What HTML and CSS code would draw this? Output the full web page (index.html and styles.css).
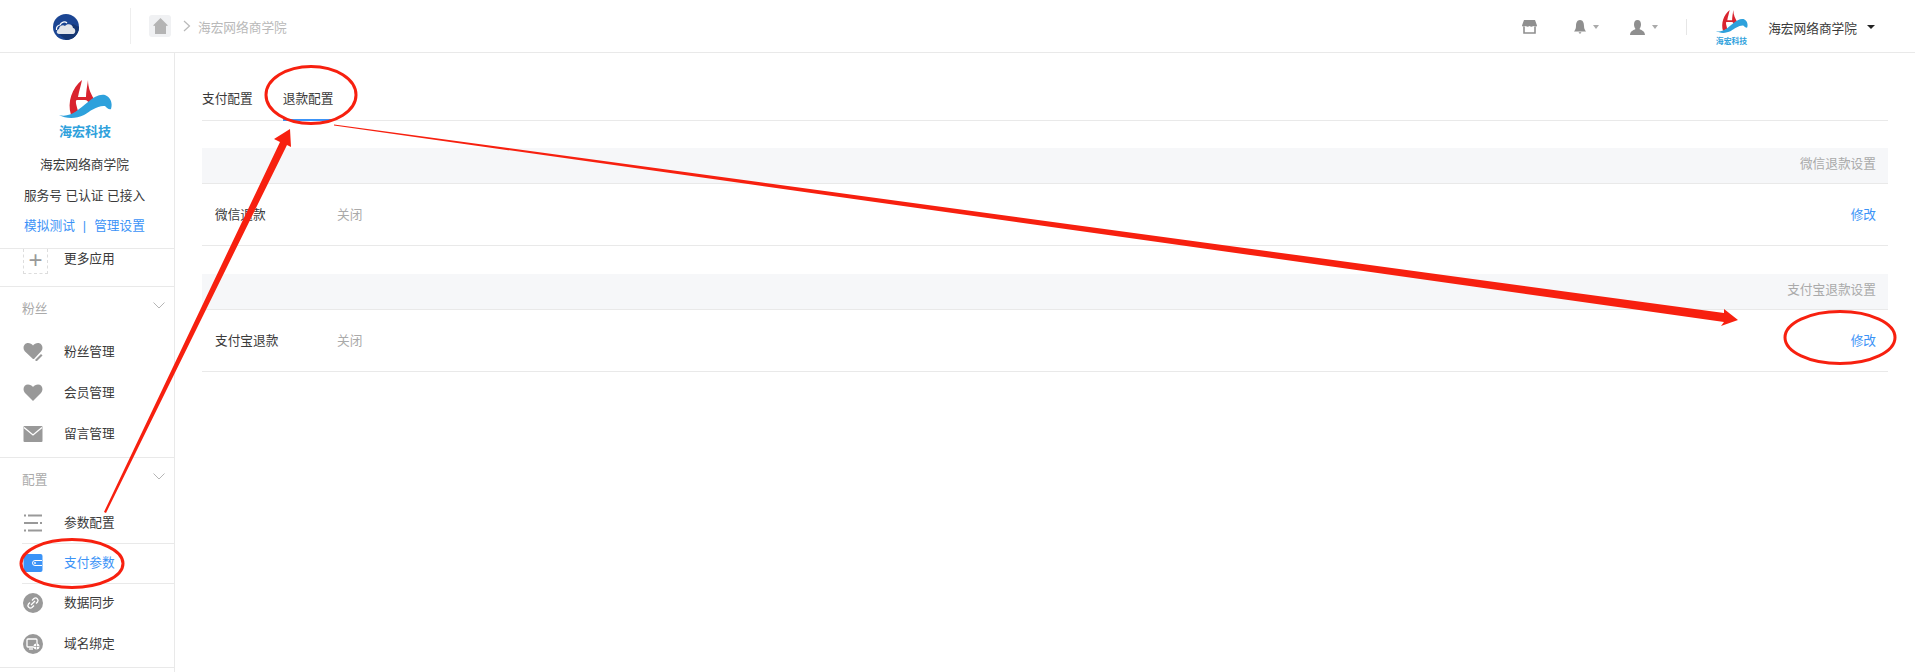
FILE: index.html
```html
<!DOCTYPE html>
<html lang="zh-CN">
<head>
  <meta charset="UTF-8" />
  <title>退款配置</title>
  <link rel="stylesheet" href="styles.css">
</head>
<body>

  <header class="topbar">
    <div class="logo-box">
      <svg width="26" height="26" viewBox="0 0 26 26">
        <circle cx="13" cy="13" r="13" fill="#1b4593"/>
        <path d="M13 26A13 13 0 0 0 26 13L20 10L6 20Z" fill="#153672"/>
        <path d="M3.500 16C3 13 5 11 7 11C8 8 12 7 14 9" fill="none" stroke="#fff" stroke-width="1.200"/>
        <path d="M6 20C3 20 3 16 6 15C6 12 10 10 12 12C14 9 20 10 20 14C23 14 23 20 20 20Z" fill="#e2e5ea"/>
      </svg>
    </div>
    <div class="crumbs">
      <span class="home-btn">
        <svg width="15" height="16" viewBox="0 0 15 16"><path d="M7.500 0L15 7.500L13 8V16H2V8L0 7.500Z" fill="#b4b4b4"/></svg>
      </span>
      <svg class="crumb-sep" width="8" height="12" viewBox="0 0 8 12"><path d="M1 1L6.500 6L1 11" fill="none" stroke="#b9b9b9" stroke-width="1.200"/></svg>
      <span class="crumb-text">海宏网络商学院</span>
    </div>
    <div class="top-right">
      <svg width="15" height="14" viewBox="0 0 15 14"><path d="M2 0H13L15 5.500C15 7 12.500 7 11.250 6C10 7 8.750 7 7.500 6C6.250 7 5 7 3.750 6C2.500 7 0 7 0 5.500Z" fill="#8f8f8f"/><path d="M2 7V13H13V7" fill="none" stroke="#8f8f8f" stroke-width="1.600"/></svg>
      <span class="top-icon top-bell">
        <svg width="12" height="14" viewBox="0 0 12 14"><path d="M6 0C9 0 10 3 10 6C10 9 11 10 12 11.500H0C1 10 2 9 2 6C2 3 3 0 6 0Z M4.500 12.200H7.500L6 14Z" fill="#8f8f8f"/></svg>
        <i class="caret-grey"></i>
      </span>
      <span class="top-icon top-user">
        <svg width="15" height="15" viewBox="0 0 15 15"><path d="M7.500 0C10 0 11 2 11 4.500C11 7 10 8 9.500 9C11 10 15 11 15 15H0C0 11 4 10 5.500 9C5 8 4 7 4 4.500C4 2 5 0 7.500 0Z" fill="#8f8f8f"/></svg>
        <i class="caret-grey"></i>
      </span>
      <span class="top-divider"></span>
      <svg class="top-brand" width="33" height="35" viewBox="0 0 54 58">
        <path d="M24 0C14 8 9 22 13 35L20 31C18 24 17 20 19 20H27C29 20 30 21 31 24L38 22C33 15 30 8 30 0C29 7 28 12 28 17H20C21 11 23 5 24 0Z" fill="#d9232e"/>
        <path d="M1 35C12 38 20 30 30 22C36 17 41 14 47 15C52 17 55 22 53 29C51 30 49 28 47 26C40 25 32 31 26 35C18 39 8 39 1 35Z" fill="#2ea1dc"/>
        <text x="27" y="56" text-anchor="middle" class="brand-text">海宏科技</text>
      </svg>
      <span class="top-name">海宏网络商学院</span>
      <i class="caret-dark"></i>
    </div>
  </header>

  <div class="layout">
    <aside class="sidebar">
      <div class="account">
        <svg class="account-logo" width="54" height="58" viewBox="0 0 54 58">
          <path d="M24 0C14 8 9 22 13 35L20 31C18 24 17 20 19 20H27C29 20 30 21 31 24L38 22C33 15 30 8 30 0C29 7 28 12 28 17H20C21 11 23 5 24 0Z" fill="#d9232e"/>
          <path d="M1 35C12 38 20 30 30 22C36 17 41 14 47 15C52 17 55 22 53 29C51 30 49 28 47 26C40 25 32 31 26 35C18 39 8 39 1 35Z" fill="#2ea1dc"/>
          <text x="27" y="56" text-anchor="middle" class="brand-text">海宏科技</text>
        </svg>
        <p>海宏网络商学院</p>
        <p>服务号 已认证 已接入</p>
        <p class="account-links"><a href="#">模拟测试</a><span>|</span><a href="#">管理设置</a></p>
      </div>

      <a class="nav-item nav-more" href="#">
        <span class="more-box">+</span>
        <span>更多应用</span>
      </a>

      <section class="nav-group">
        <div class="group-title">粉丝
          <svg width="12" height="7" viewBox="0 0 12 7"><path d="M0.500 0.500L6 6L11.500 0.500" fill="none" stroke="#b5b5b5"/></svg>
        </div>
        <a class="nav-item" href="#">
          <svg width="20" height="20" viewBox="0 0 20 20"><path d="M10 17L2 9.500C-1 6 1 1 5 1C7 1 9 2 10 3.500C11 2 13 1 15 1C19 1 21 6 18 9.500L16.500 11L11 17Z" fill="#999"/><path d="M12.500 17.500L18 12L19.500 13.500L14 19H12.500Z" fill="#999"/></svg>
          <span>粉丝管理</span>
        </a>
        <a class="nav-item" href="#">
          <svg width="20" height="20" viewBox="0 0 20 20"><path d="M10 18L2 10C-1 6 1 1.500 5 1.500C7 1.500 9 2.500 10 4C11 2.500 13 1.500 15 1.500C19 1.500 21 6 18 10Z" fill="#999"/></svg>
          <span>会员管理</span>
        </a>
        <a class="nav-item" href="#">
          <svg width="20" height="20" viewBox="0 0 20 20"><rect x="0.500" y="2" width="19" height="16" rx="1" fill="#999"/><path d="M1 3.500L10 11L19 3.500" fill="none" stroke="#fff" stroke-width="1.300"/></svg>
          <span>留言管理</span>
        </a>
      </section>

      <section class="nav-group nav-group-last">
        <div class="group-title">配置
          <svg width="12" height="7" viewBox="0 0 12 7"><path d="M0.500 0.500L6 6L11.500 0.500" fill="none" stroke="#b5b5b5"/></svg>
        </div>
        <a class="nav-item" href="#">
          <svg width="20" height="20" viewBox="0 0 20 20"><path d="M1 1.500H3V3.500H1Z M5 1.500H19V3.500H5Z M1 9H15V11H1Z M17 9H19V11H17Z M1 16.500H3V18.500H1Z M5 16.500H19V18.500H5Z" fill="#999"/></svg>
          <span>参数配置</span>
        </a>
        <a class="nav-item is-active" href="#">
          <svg width="20" height="20" viewBox="0 0 20 20"><rect x="0.500" y="1" width="19" height="18" rx="2" fill="#3b93f7"/><path d="M19 7.500H12A2.500 2.500 0 0 0 12 12.500H19" fill="none" stroke="#fff"/><circle cx="12" cy="10" r="0.900" fill="#fff"/></svg>
          <span>支付参数</span>
        </a>
        <a class="nav-item" href="#">
          <svg width="20" height="20" viewBox="0 0 20 20"><circle cx="10" cy="10" r="10" fill="#999"/><path d="M9 7.500L11 5.500A2.500 2.500 0 0 1 14.500 9L13 10.500 M11 12.500L9 14.500A2.500 2.500 0 0 1 5.500 11L7 9.500 M8 12L12 8" fill="none" stroke="#fff" stroke-width="1.300"/></svg>
          <span>数据同步</span>
        </a>
        <a class="nav-item" href="#">
          <svg width="20" height="20" viewBox="0 0 20 20"><circle cx="10" cy="10" r="10" fill="#999"/><rect x="4" y="5" width="10" height="8" rx="1" fill="none" stroke="#fff" stroke-width="1.300"/><path d="M6 15H10" stroke="#fff" stroke-width="1.300"/><circle cx="13.500" cy="12.500" r="3" fill="#fff"/><path d="M10.500 12.500H16.500M13.500 9.500V15.500" stroke="#999" stroke-width="0.700"/></svg>
          <span>域名绑定</span>
        </a>
      </section>
    </aside>

    <main class="content">
      <nav class="tabs">
        <a class="tab" href="#">支付配置</a>
        <a class="tab is-current" href="#">退款配置</a>
      </nav>

      <section class="panel">
        <div class="panel-head">微信退款设置</div>
        <div class="panel-row">
          <span class="row-label">微信退款</span>
          <span class="row-value">关闭</span>
          <a class="row-edit" href="#">修改</a>
        </div>
      </section>

      <section class="panel">
        <div class="panel-head">支付宝退款设置</div>
        <div class="panel-row">
          <span class="row-label">支付宝退款</span>
          <span class="row-value">关闭</span>
          <a class="row-edit" href="#">修改</a>
        </div>
      </section>
    </main>
  </div>

  <!-- red marks drawn over the screenshot -->
  <svg class="marks" width="1915" height="672" viewBox="0 0 1915 672">
    <g fill="none" stroke="#f7200f" stroke-width="3">
      <ellipse cx="311" cy="95" rx="45" ry="28.500"/>
      <ellipse cx="1840" cy="337.500" rx="55" ry="26"/>
      <ellipse cx="72" cy="563.500" rx="51" ry="24"/>
    </g>
    <g fill="#f7200f">
      <path d="M104 512L280 142L274 139L290 129L291 147L287 145L106 513Z"/>
      <path d="M334 124.500L1724 313L1724 309L1738 320L1721 326L1724 322L334 125.500Z"/>
    </g>
  </svg>

</body>
</html>
```

FILE: styles.css
```css
* {
  margin: 0;
  padding: 0;
  box-sizing: border-box;
  font-family: "Liberation Sans", "Noto Sans CJK SC", sans-serif;
}

html, body {
  height: 100%;
  overflow: hidden;
}

body {
  position: relative;
  background: #fff;
  color: #3a3a3a;
  font-size: 12.7px;
}

a {
  text-decoration: none;
  color: inherit;
}

.brand-text {
  font-size: 13px;
  font-weight: bold;
  fill: #2ea1dc;
}

.topbar {
  height: 53px;
  display: flex;
  align-items: center;
  border-bottom: 1px solid #e9e9e9;
}

.logo-box {
  width: 131px;
  height: 36px;
  padding: 2px 0 0 53px;
  display: flex;
  align-items: center;
  border-right: 1px solid #eee;
}

.crumbs {
  margin-left: 18px;
  display: flex;
  align-items: center;
}

.home-btn {
  width: 22px;
  height: 22px;
  background: #f0f1f3;
  border-radius: 3px;
  display: flex;
  align-items: center;
  justify-content: center;
}

.crumb-sep {
  margin-left: 12px;
}

.crumb-text {
  margin-left: 7px;
  color: #b9b9b9;
}

.top-right {
  margin-left: auto;
  padding: 2px 40px 0 0;
  display: flex;
  align-items: center;
}

.top-icon {
  display: flex;
  align-items: center;
}

.top-bell {
  margin-left: 37px;
}

.top-user {
  margin-left: 31px;
}

.caret-grey {
  margin-left: 7px;
  border: 3.5px solid transparent;
  border-top: 4px solid #aaa;
  border-bottom: 0;
}

.caret-dark {
  margin-left: 10px;
  border: 4px solid transparent;
  border-top: 4px solid #222;
  border-bottom: 0;
}

.top-divider {
  width: 1px;
  height: 16px;
  margin-left: 28px;
  background: #e6e6e6;
}

.top-brand {
  margin-left: 28px;
}

.top-name {
  margin-left: 20px;
}

.layout {
  display: flex;
  height: calc(100% - 53px);
}

.sidebar {
  width: 175px;
  flex-shrink: 0;
  border-right: 1px solid #e9e9e9;
  overflow: hidden;
}

.account {
  height: 196px;
  padding: 27px 5px 0 0;
  text-align: center;
  border-bottom: 1px solid #e9e9e9;
}

.account-logo {
  display: block;
  margin: 0 0 12px 58px;
}

.account p {
  height: 30.5px;
  line-height: 30.5px;
  white-space: nowrap;
}

.account-links {
  color: #3b93f7;
}

.account-links span {
  margin: 0 8px;
}

.nav-item {
  height: 41px;
  padding-left: 23px;
  display: flex;
  align-items: center;
  gap: 21px;
}

.nav-item svg {
  flex-shrink: 0;
}

.nav-item span {
  margin-top: -2px;
}

.nav-more {
  height: 37px;
  align-items: flex-start;
  gap: 16px;
  line-height: 21px;
}

.nav-more span {
  margin-top: 0;
}

.more-box {
  width: 25px;
  height: 25px;
  border: 1px dashed #ddd;
  border-top: 0;
  color: #999;
  font-size: 24px;
  line-height: 21px;
  text-align: center;
}

.nav-group {
  border-top: 1px solid #e9e9e9;
  padding-bottom: 3px;
}

.nav-group-last {
  border-bottom: 1px solid #e9e9e9;
}

.group-title {
  height: 44px;
  padding: 0 9px 3px 22px;
  display: flex;
  align-items: center;
  justify-content: space-between;
  color: #aaa;
}

.group-title svg {
  margin-top: -5px;
}

.is-active {
  position: relative;
  height: 39px;
  margin-right: -1px;
  background: #fff;
  color: #3b93f7;
}

.is-active::before,
.is-active::after {
  content: "";
  position: absolute;
  left: 22px;
  right: 0;
  height: 1px;
  background: #e9e9e9;
}

.is-active::before {
  top: 0;
}

.is-active::after {
  bottom: -2px;
}

.content {
  flex: 1;
  padding: 0 27px;
}

.tabs {
  height: 68px;
  padding-top: 34px;
  display: flex;
  gap: 30px;
  border-bottom: 1px solid #e9e9e9;
}

.tab {
  height: 34px;
  line-height: 24px;
}

.is-current {
  border-bottom: 2px solid #3b93f7;
}

.panel {
  margin-top: 27px;
  margin-bottom: 28px;
}

.panel-head {
  height: 36px;
  line-height: 33px;
  padding-right: 12px;
  background: #f6f7f9;
  border-bottom: 1px solid #e9e9e9;
  text-align: right;
  color: #aaa;
}

.panel-row {
  height: 62px;
  padding: 0 12px 2px 13px;
  display: flex;
  align-items: center;
  border-bottom: 1px solid #e9e9e9;
}

.row-label {
  width: 122px;
}

.row-value {
  color: #aaa;
}

.row-edit {
  margin-left: auto;
  color: #3b93f7;
}

.marks {
  position: absolute;
  left: 0;
  top: 0;
  pointer-events: none;
}
```
